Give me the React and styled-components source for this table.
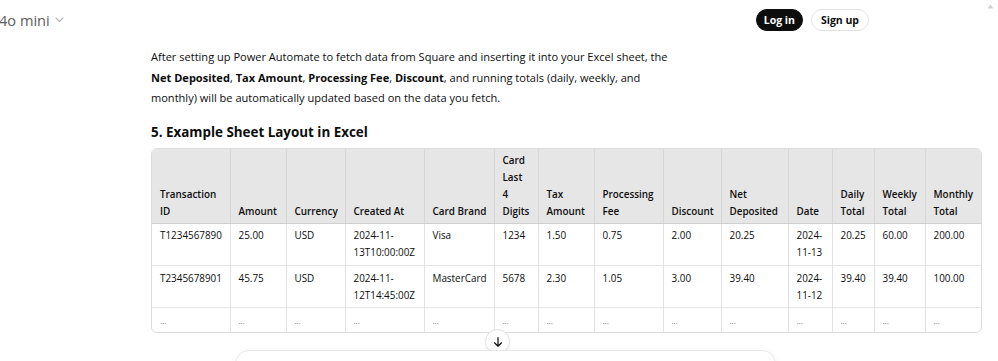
import React from "react";
import styled, { createGlobalStyle } from "styled-components";

const Global = createGlobalStyle`
  html, body { margin: 0; padding: 0; background: #ffffff; }
  body {
    font-family: "Open Sans", "Noto Sans", sans-serif;
    color: #0d0d0d;
    overflow: hidden;
    width: 998px;
    height: 361px;
  }
`;

const Page = styled.div`
  position: relative;
  width: 998px;
  height: 361px;
  overflow: hidden;
`;

const TopBar = styled.header`
  height: 40px;
  display: flex;
  align-items: center;
  justify-content: space-between;
  padding: 0 129px 0 0;
`;

const ModelPicker = styled.div`
  display: flex;
  align-items: center;
  gap: 5px;
  font-size: 14.6px;
  color: #5d5d5d;
  margin-left: -1px;
`;

const Actions = styled.div`
  display: flex;
  align-items: center;
  gap: 8px;
`;

const Pill = styled.button`
  height: 22px;
  padding: 0 ${(p) => (p.$dark ? "7px" : "9px")};
  border-radius: 999px;
  font-family: inherit;
  font-weight: 700;
  font-size: 10.5px;
  line-height: 1;
  cursor: pointer;
  border: 1px solid ${(p) => (p.$dark ? "#0d0d0d" : "#e3e3e3")};
  background: ${(p) => (p.$dark ? "#0d0d0d" : "#ffffff")};
  color: ${(p) => (p.$dark ? "#ffffff" : "#0d0d0d")};
`;

const Thread = styled.main`
  margin-left: 151px;
  padding-top: 7px;
`;

const Para = styled.p`
  margin: 0;
  font-size: 11.05px;
  line-height: 20.6px;
  white-space: nowrap;
  b { font-weight: 700; }
`;

const Heading = styled.h3`
  margin: 12px 0 5px;
  font-size: 13.4px;
  line-height: 22px;
  font-weight: 700;
`;

const TableWrap = styled.div`
  width: 831px;
  border: 1px solid #dcdcdc;
  border-radius: 6px;
  overflow: hidden;
  box-sizing: border-box;
`;

const Table = styled.table`
  width: 100%;
  border-collapse: collapse;
  table-layout: fixed;
  font-size: 9.9px;
  line-height: 17px;
`;

const Th = styled.th`
  background: #e6e6e6;
  font-weight: 600;
  text-align: left;
  vertical-align: bottom;
  padding: 3px ${(p) => (p.$narrow ? "12px" : "5px")} 3px 8px;
  border-left: 1px solid #d6d6d6;
  border-bottom: 1px solid #d0d0d0;
  &:first-child { border-left: none; }
`;

const Td = styled.td`
  text-align: left;
  vertical-align: top;
  padding: 3.6px 5px 3.6px 8px;
  border-left: 1px solid #e3e3e3;
  border-top: 1px solid #e6e6e6;
  color: ${(p) => (p.$muted ? "#777" : "#0d0d0d")};
  font-size: ${(p) => (p.$muted ? "8px" : "inherit")};
  line-height: 17px;
  &:first-child { border-left: none; }
`;

const ScrollBtn = styled.div`
  position: absolute;
  left: 485px;
  top: 329px;
  width: 23px;
  height: 23px;
  border-radius: 50%;
  background: #fff;
  border: 1px solid #e3e3e3;
  display: flex;
  align-items: center;
  justify-content: center;
  box-shadow: 0 1px 3px rgba(0,0,0,0.06);
`;

const Composer = styled.div`
  position: absolute;
  left: 235px;
  top: 350px;
  width: 541px;
  height: 60px;
  border: 1px solid #e8e8e8;
  border-radius: 14px;
  background: #fff;
  box-shadow: 0 0 6px rgba(0,0,0,0.04);
  box-sizing: border-box;
`;

const ScrollMark = styled.svg`
  position: absolute;
  right: 4px;
  top: 4px;
`;

const cols = [78, 56, 59, 79, 70, 44, 56, 69, 58, 67, 44, 42, 51, 58];
const headers = [
  "Transaction ID", "Amount", "Currency", "Created At", "Card Brand",
  "Card Last 4 Digits", "Tax Amount", "Processing Fee", "Discount",
  "Net Deposited", "Date", "Daily Total", "Weekly Total", "Monthly Total",
];
const rows = [
  ["T1234567890", "25.00", "USD", "2024-11-13T10:00:00Z", "Visa", "1234", "1.50", "0.75", "2.00", "20.25", "2024-11-13", "20.25", "60.00", "200.00"],
  ["T2345678901", "45.75", "USD", "2024-11-12T14:45:00Z", "MasterCard", "5678", "2.30", "1.05", "3.00", "39.40", "2024-11-12", "39.40", "39.40", "100.00"],
];

export default function App() {
  return (
    <Page>
      <Global />
      <TopBar>
        <ModelPicker>
          <span>4o mini</span>
          <svg width="9" height="6" viewBox="0 0 9 6" fill="none">
            <path d="M1 1l3.5 3.5L8 1" stroke="#b4b4b4" strokeWidth="1.1" strokeLinecap="round" strokeLinejoin="round" />
          </svg>
        </ModelPicker>
        <Actions>
          <Pill $dark>Log in</Pill>
          <Pill>Sign up</Pill>
        </Actions>
      </TopBar>
      <ScrollMark width="7" height="5" viewBox="0 0 7 5">
        <path d="M3.5 0.5L6.5 4.5H0.5Z" fill="#d0d0d0" />
      </ScrollMark>
      <Thread>
        <Para>
          After setting up Power Automate to fetch data from Square and inserting it into your Excel sheet, the
          <br />
          <b>Net Deposited</b>, <b>Tax Amount</b>, <b>Processing Fee</b>, <b>Discount</b>, and running totals (daily, weekly, and
          <br />
          monthly) will be automatically updated based on the data you fetch.
        </Para>
        <Heading>5. Example Sheet Layout in Excel</Heading>
        <TableWrap>
          <Table>
            <colgroup>
              {cols.map((w, i) => (
                <col key={i} style={{ width: w }} />
              ))}
            </colgroup>
            <thead>
              <tr>
                {headers.map((h) => (
                  <Th key={h} $narrow={h === "Card Last 4 Digits"}>{h}</Th>
                ))}
              </tr>
            </thead>
            <tbody>
              {rows.map((r, i) => (
                <tr key={i}>
                  {r.map((c, j) => (
                    <Td key={j}>{c}</Td>
                  ))}
                </tr>
              ))}
              <tr>
                {cols.map((_, j) => (
                  <Td key={j} $muted>...</Td>
                ))}
              </tr>
            </tbody>
          </Table>
        </TableWrap>
      </Thread>
      <ScrollBtn>
        <svg width="12" height="12" viewBox="0 0 12 12" fill="none">
          <path d="M6 1.5v8.5M2.5 6.8L6 10.2l3.5-3.4" stroke="#0d0d0d" strokeWidth="1.2" strokeLinecap="round" strokeLinejoin="round" />
        </svg>
      </ScrollBtn>
      <Composer />
    </Page>
  );
}
